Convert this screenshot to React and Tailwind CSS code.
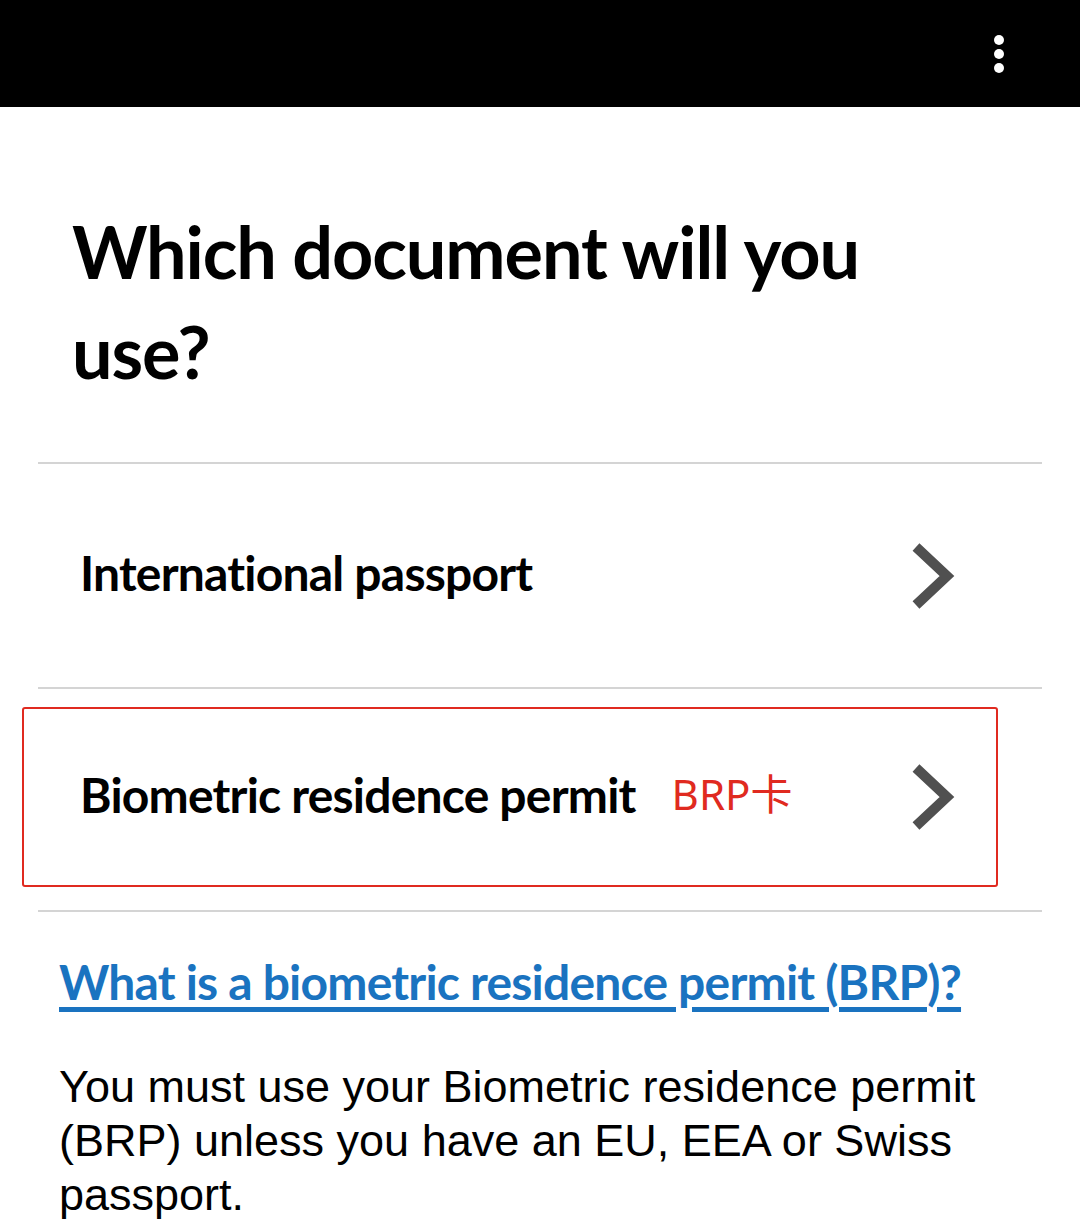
export default function App() {
    return (
        <div className="min-h-screen bg-white text-black" style={{ fontFamily: "Lato, 'Noto Sans', sans-serif" }}>
            <div className="h-[107px] bg-black flex items-center justify-end pr-[76px]">
                <div className="flex flex-col gap-[4px]">
                    <span className="block w-[10px] h-[10px] rounded-full bg-white" />
                    <span className="block w-[10px] h-[10px] rounded-full bg-white" />
                    <span className="block w-[10px] h-[10px] rounded-full bg-white" />
                </div>
            </div>

            <h1 className="pl-[72px] pt-[94px] text-[72px] leading-[100px] font-bold tracking-[-1.1px]">
                Which document will you
                <br />
                use?
            </h1>

            <div className="mx-[38px] mt-[61px] border-t-2 border-[#d4d4d4]">
                <div className="h-[223px] flex items-center justify-between pl-[42px] pr-[86px]">
                    <span className="text-[48px] font-bold tracking-[-0.8px] pb-[6px]">International passport</span>
                    <svg width="46" height="70" viewBox="0 0 46 70">
                        <path d="M6 6 L37 35 L6 64" fill="none" stroke="#505050" strokeWidth="10" />
                    </svg>
                </div>
            </div>

            <div className="mx-[38px] border-t-2 border-[#d4d4d4] pt-[18px] pb-[23px]">
                <div className="ml-[-16px] mr-[44px] h-[180px] border-2 border-[#e02a20] rounded-[3px] flex items-center pl-[56px] pr-[40px]">
                    <span className="text-[48px] font-bold tracking-[-0.8px] pb-[4px]">Biometric residence permit</span>
                    <span className="ml-[36px] text-[42px] text-[#e02a20] pb-[8px]" style={{ fontFamily: "'Noto Sans', 'Noto Sans CJK SC', sans-serif" }}>BRP卡</span>
                    <svg width="46" height="70" viewBox="0 0 46 70" className="ml-auto">
                        <path d="M6 6 L37 35 L6 64" fill="none" stroke="#505050" strokeWidth="10" />
                    </svg>
                </div>
            </div>

            <div className="mx-[38px] border-t-2 border-[#d4d4d4] pt-[34px] pl-[21px]">
                <a href="#" className="text-[48px] font-bold text-[#1a73c0] underline decoration-[5px] underline-offset-[7px] tracking-[-0.8px]">
                    What is a biometric residence permit (BRP)?
                </a>
                <p className="mt-[42px] text-[45px] leading-[54px] pr-[30px]" style={{ fontFamily: "'Liberation Sans', Arial, sans-serif" }}>
                    You must use your Biometric residence permit (BRP) unless you have an EU, EEA or Swiss passport.
                </p>
            </div>
        </div>
    );
}
